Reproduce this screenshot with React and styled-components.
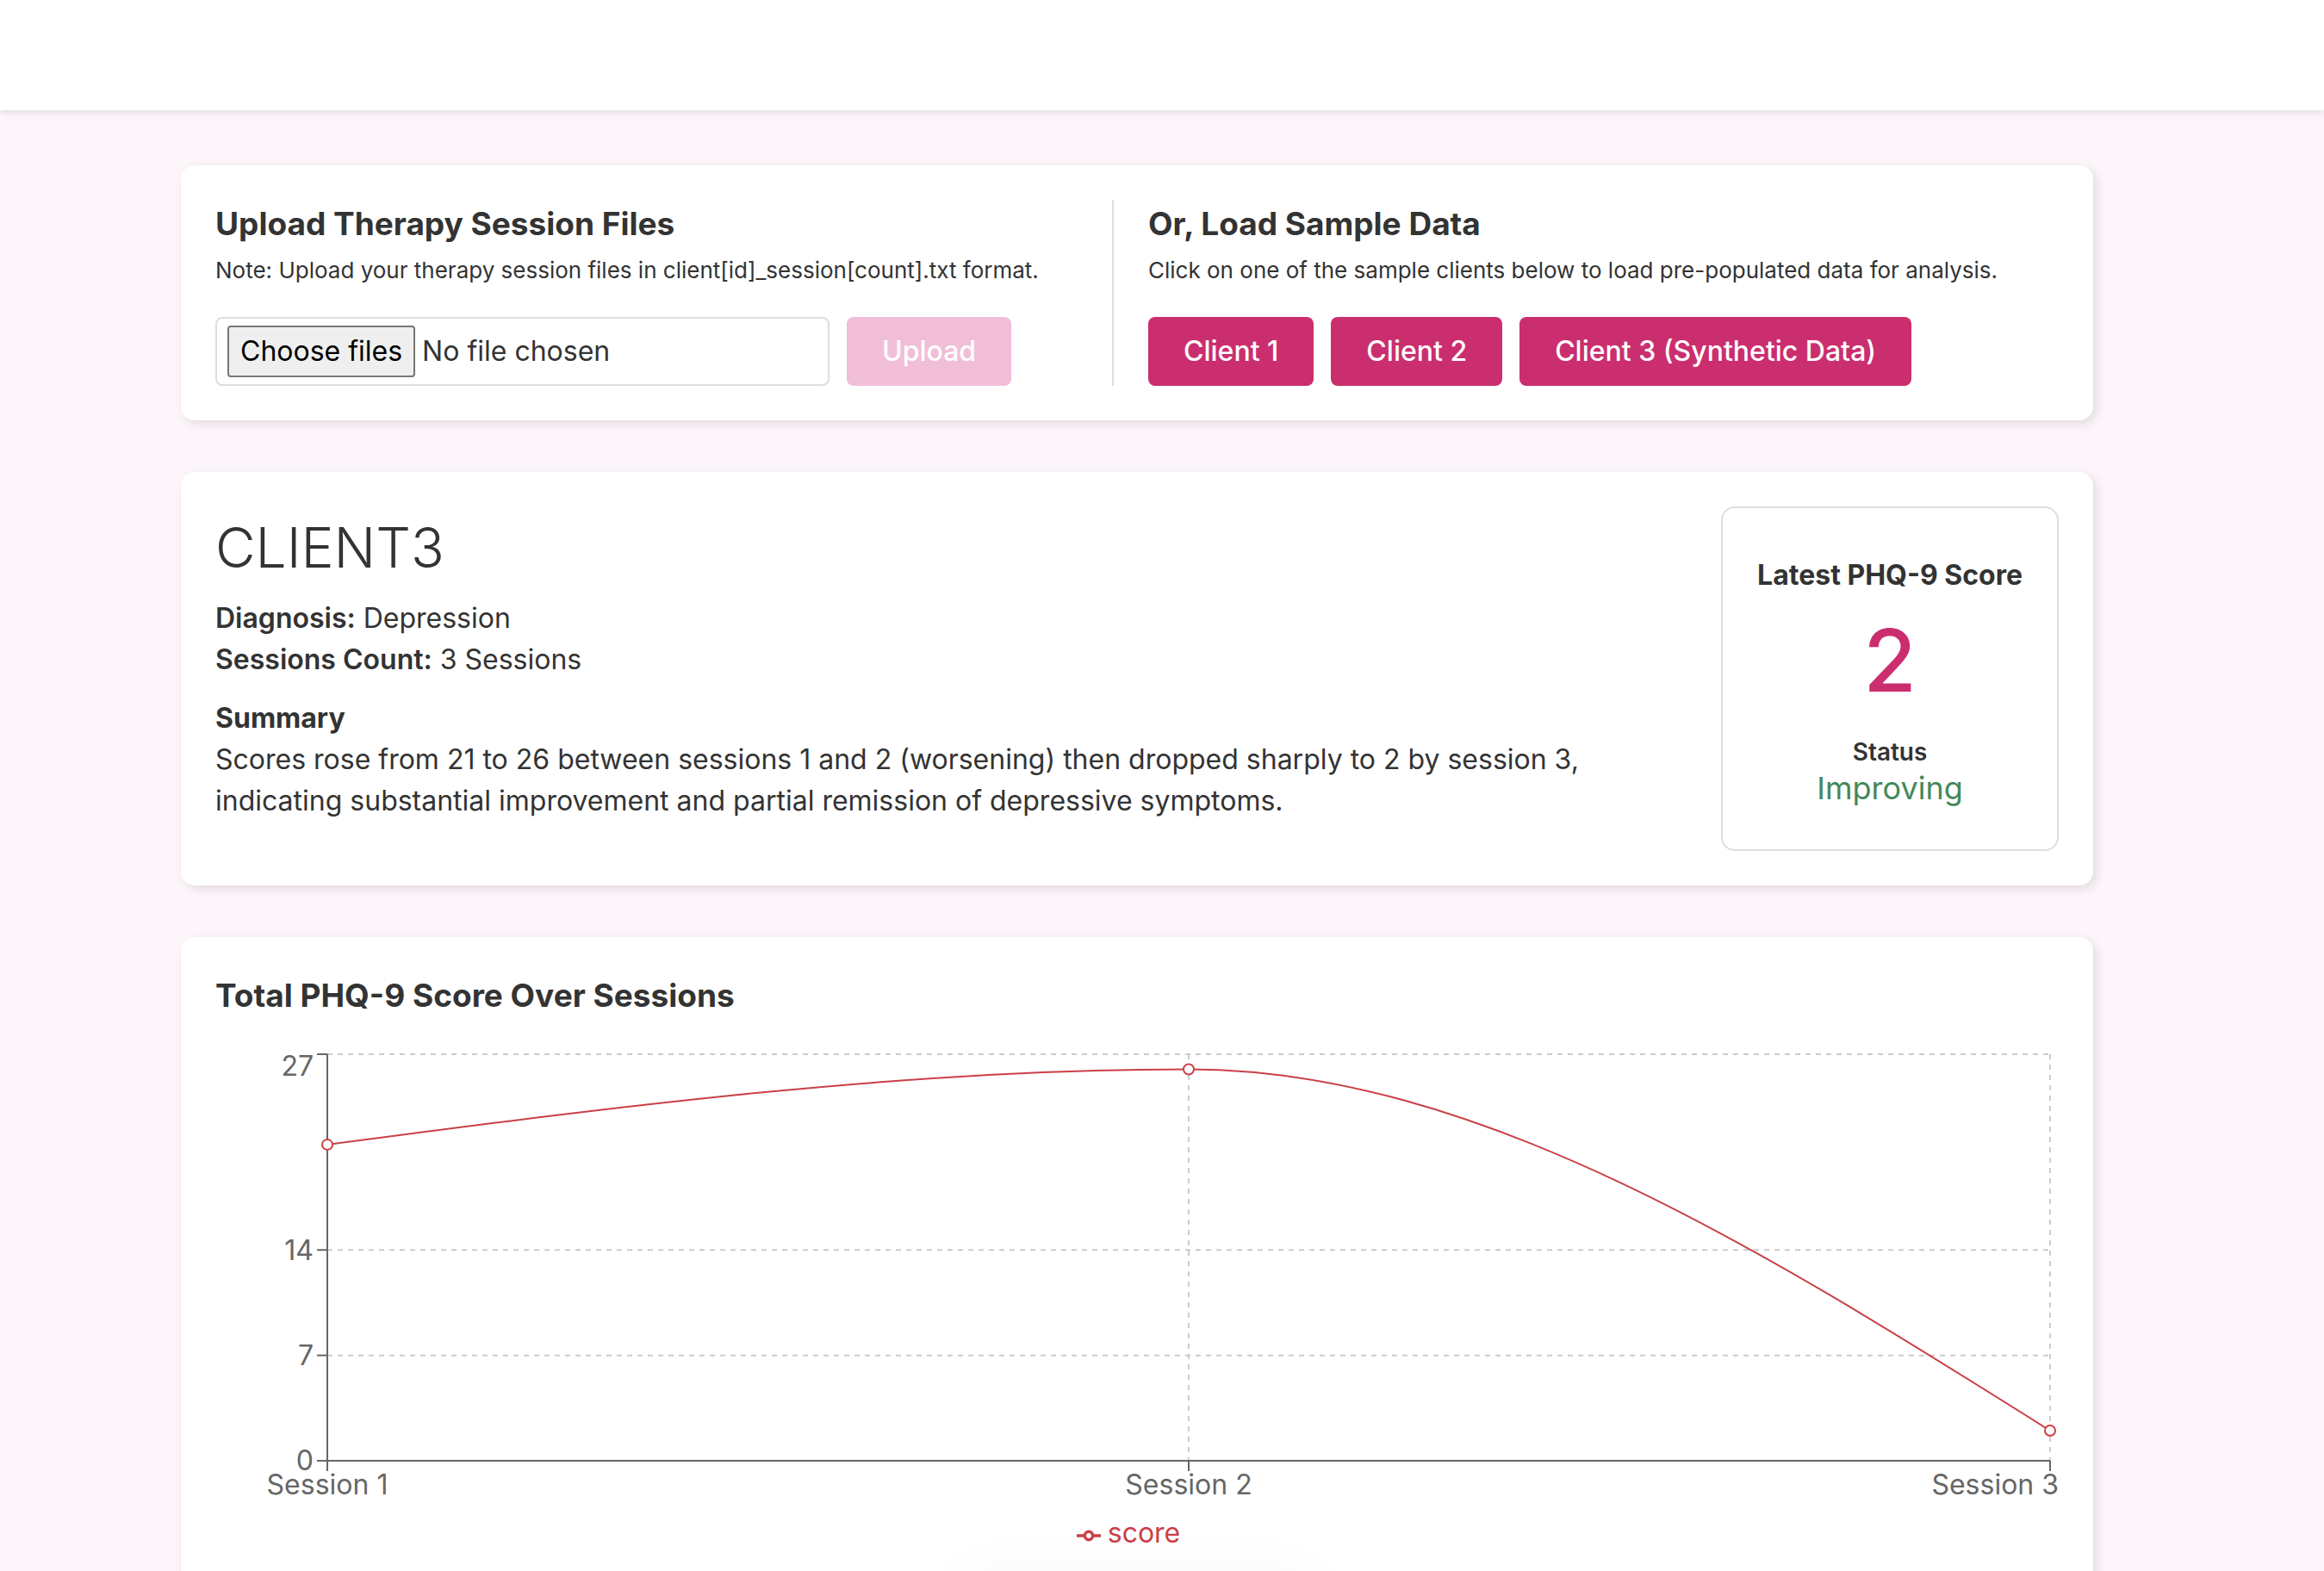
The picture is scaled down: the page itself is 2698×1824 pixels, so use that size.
import React, { useLayoutEffect, useRef, useState } from "react";
import styled, { createGlobalStyle } from "styled-components";

const ACCENT = "#cb2e6e";
const SERIES = "#ca4046";
const AXIS = "#666666";

const GlobalStyle = createGlobalStyle`
  *, *::before, *::after { box-sizing: border-box; }
  html, body, #root { height: 100%; }
  body {
    margin: 0;
    overflow: hidden;
    background: #fcf6fb;
    color: #333333;
    font: 400 32px/48px Inter, "Liberation Sans", sans-serif;
  }
  h1, h2, h3, p { margin: 0; }
`;

const Page = styled.div`
  position: relative;
  display: flex;
  flex-direction: column;
  height: 100vh;
  overflow: hidden;
`;

const TopBar = styled.header`
  flex: none;
  height: 128px;
  background: #ffffff;
  box-shadow: 0 2px 8px rgba(0, 0, 0, 0.12);
`;

const Main = styled.main`
  display: flex;
  flex-direction: column;
  gap: 60px;
  padding: 64px 268px 64px 210px;
`;

const Card = styled.section`
  flex: none;
  padding: 40px;
  background: #ffffff;
  border-radius: 16px;
  box-shadow: 4px 4px 12px rgba(0, 0, 0, 0.11);
`;

const SourceCard = styled(Card)`
  display: grid;
  grid-template-columns: minmax(0, 1041fr) minmax(0, 1099fr);
`;

const Source = styled.div`
  padding-left: ${(p) => (p.$divided ? "40px" : "0")};
  border-left: ${(p) => (p.$divided ? "2px solid #dddddd" : "none")};
`;

const Heading = styled.h2`
  padding-bottom: 2px;
  font-size: 37px;
  line-height: 56px;
  font-weight: 700;
`;

const Note = styled.p`
  margin-bottom: 30px;
  font-size: 26px;
`;

const Controls = styled.div`
  display: flex;
  gap: 20px;
`;

const FilePicker = styled.label`
  position: relative;
  display: flex;
  align-items: center;
  gap: 8px;
  width: 713px;
  height: 80px;
  padding: 0 12px;
  border: 2px solid #dddddd;
  border-radius: 8px;
`;

const FileInput = styled.input`
  position: absolute;
  inset: 0;
  width: 100%;
  opacity: 0;
`;

const FileButton = styled.span`
  height: 60px;
  padding: 0 13px;
  border: 2px solid #767676;
  border-radius: 4px;
  background: #efefef;
  color: #000000;
  line-height: 56px;
`;

const Button = styled.button`
  height: 80px;
  padding: 0 41px;
  border: 0;
  border-radius: 8px;
  background: ${ACCENT};
  color: #ffffff;
  font: inherit;
  font-weight: 500;
  cursor: pointer;

  &:disabled {
    background: #f1bed8;
    cursor: default;
  }
`;

const ClientCard = styled(Card)`
  display: flex;
  gap: 40px;
`;

const ClientInfo = styled.div`
  flex: 1;
  min-width: 0;
`;

const ClientName = styled.h1`
  margin-bottom: 10px;
  font-size: 64px;
  line-height: 96px;
  font-weight: 300;
  text-transform: uppercase;
`;

const Term = styled.strong`
  font-weight: 600;
`;

const Summary = styled.div`
  margin-top: 20px;
`;

const Subheading = styled.h3`
  font-size: 32px;
  line-height: 48px;
  font-weight: 700;
`;

const ScoreBox = styled.aside`
  display: flex;
  flex-direction: column;
  align-items: center;
  justify-content: center;
  height: 400px;
  padding: 4px 40px 0;
  border: 2px solid #dddddd;
  border-radius: 16px;
`;

const ScoreValue = styled.div`
  color: ${ACCENT};
  font-size: 100px;
  line-height: 150px;
  font-weight: 500;
`;

const StatusLabel = styled.div`
  margin-top: 10px;
  font-size: 28px;
  line-height: 42px;
  font-weight: 600;
`;

const StatusValue = styled.div`
  color: #43885a;
  font-size: 36px;
  line-height: 42px;
`;

const ChartFrame = styled.div`
  margin-top: 28px;
`;

const ChartSvg = styled.svg`
  display: block;
  width: 100%;
  height: 542px;
  font-size: 32px;
`;

const Legend = styled.div`
  display: flex;
  justify-content: center;
  align-items: center;
  gap: 8px;
  padding-right: 20px;
  color: ${SERIES};
`;

const LegendIcon = styled.svg`
  width: 28px;
  height: 28px;
  margin-top: 6px;
`;

const BottomGlow = styled.div`
  position: absolute;
  left: 50%;
  bottom: -60px;
  width: 400px;
  height: 40px;
  margin-left: -228px;
  border-radius: 20px;
  box-shadow: 0 0 80px rgba(0, 0, 0, 0.07);
`;

const sessions = [
  { name: "Session 1", score: 21 },
  { name: "Session 2", score: 26 },
  { name: "Session 3", score: 2 },
];
const yTicks = [0, 7, 14, 27];
const Y_MAX = 27;
const PLOT = { left: 130, right: 10, top: 10, height: 472 };

/* Cubic path through the points that never overshoots between them. */
function monotonePath(pts) {
  const slope = (a, b) => (b.y - a.y) / (b.x - a.x);
  const n = pts.length;
  const tangents = pts.map((p, i) => {
    if (i === 0 || i === n - 1) return 0;
    const s0 = slope(pts[i - 1], p);
    const s1 = slope(p, pts[i + 1]);
    const h0 = p.x - pts[i - 1].x;
    const h1 = pts[i + 1].x - p.x;
    const mean = (s0 * h1 + s1 * h0) / (h0 + h1);
    const limit = Math.min(Math.abs(s0), Math.abs(s1), 0.5 * Math.abs(mean));
    return (Math.sign(s0) + Math.sign(s1)) * limit;
  });
  tangents[0] = (3 * slope(pts[0], pts[1]) - tangents[1]) / 2;
  tangents[n - 1] = (3 * slope(pts[n - 2], pts[n - 1]) - tangents[n - 2]) / 2;
  let d = `M${pts[0].x},${pts[0].y}`;
  for (let i = 1; i < n; i++) {
    const a = pts[i - 1];
    const b = pts[i];
    const dx = (b.x - a.x) / 3;
    d += `C${a.x + dx},${a.y + dx * tangents[i - 1]},${b.x - dx},${b.y - dx * tangents[i]},${b.x},${b.y}`;
  }
  return d;
}

function ScoreChart() {
  const frame = useRef(null);
  const [width, setWidth] = useState(2140);

  useLayoutEffect(() => {
    const measure = () => setWidth(frame.current.clientWidth);
    measure();
    window.addEventListener("resize", measure);
    return () => window.removeEventListener("resize", measure);
  }, []);

  const x0 = PLOT.left;
  const x1 = width - PLOT.right;
  const bottom = PLOT.top + PLOT.height;
  const yOf = (v) => bottom - (v / Y_MAX) * PLOT.height;
  const pts = sessions.map((s, i) => ({
    x: x0 + ((x1 - x0) * i) / (sessions.length - 1),
    y: yOf(s.score),
  }));

  return (
    <ChartFrame ref={frame}>
      <ChartSvg role="img" aria-label="Total PHQ-9 score for each session">
        <g stroke="#cccccc" strokeWidth="2" strokeDasharray="6 6">
          {yTicks.slice(1).map((v) => (
            <line key={v} x1={x0} x2={x1} y1={yOf(v)} y2={yOf(v)} />
          ))}
          {pts.map((p, i) => (
            <line key={i} x1={p.x} x2={p.x} y1={PLOT.top} y2={bottom} />
          ))}
        </g>
        <g stroke={AXIS} strokeWidth="2">
          <line x1={x0} x2={x1} y1={bottom} y2={bottom} />
          <line x1={x0} x2={x0} y1={PLOT.top} y2={bottom} />
          {yTicks.map((v) => (
            <line key={v} x1={x0 - 12} x2={x0} y1={yOf(v)} y2={yOf(v)} />
          ))}
          {pts.map((p, i) => (
            <line key={i} x1={p.x} x2={p.x} y1={bottom} y2={bottom + 12} />
          ))}
        </g>
        <g fill={AXIS}>
          {yTicks.map((v) => (
            <text key={v} x={x0 - 16} y={Math.max(yOf(v), 24)} dy="0.355em" textAnchor="end">
              {v}
            </text>
          ))}
          {sessions.map((s, i) => {
            const last = i === sessions.length - 1;
            return (
              <text
                key={s.name}
                x={last ? width : pts[i].x}
                y={bottom + 39}
                textAnchor={last ? "end" : "middle"}
              >
                {s.name}
              </text>
            );
          })}
        </g>
        <path d={monotonePath(pts)} fill="none" stroke={SERIES} strokeWidth="2" />
        <g fill="#ffffff" stroke={SERIES} strokeWidth="2">
          {pts.map((p, i) => (
            <circle key={i} cx={p.x} cy={p.y} r="6" />
          ))}
        </g>
      </ChartSvg>
      <Legend>
        <LegendIcon viewBox="0 0 32 32" aria-hidden="true">
          <path
            d="M0,16h10.667A5.333,5.333,0,1,1,21.333,16H32M21.333,16A5.333,5.333,0,1,1,10.667,16"
            fill="none"
            stroke={SERIES}
            strokeWidth="4"
          />
        </LegendIcon>
        <span>score</span>
      </Legend>
    </ChartFrame>
  );
}

export default function App() {
  return (
    <>
      <GlobalStyle />
      <Page>
        <TopBar />
        <Main>
          <SourceCard>
            <Source>
              <Heading>Upload Therapy Session Files</Heading>
              <Note>Note: Upload your therapy session files in client[id]_session[count].txt format.</Note>
              <Controls>
                <FilePicker>
                  <FileInput type="file" multiple />
                  <FileButton>Choose files</FileButton>
                  <span>No file chosen</span>
                </FilePicker>
                <Button type="button" disabled>Upload</Button>
              </Controls>
            </Source>
            <Source $divided>
              <Heading>Or, Load Sample Data</Heading>
              <Note>Click on one of the sample clients below to load pre-populated data for analysis.</Note>
              <Controls>
                <Button type="button">Client 1</Button>
                <Button type="button">Client 2</Button>
                <Button type="button">Client 3 (Synthetic Data)</Button>
              </Controls>
            </Source>
          </SourceCard>

          <ClientCard>
            <ClientInfo>
              <ClientName>Client3</ClientName>
              <p><Term>Diagnosis:</Term> Depression</p>
              <p><Term>Sessions Count:</Term> 3 Sessions</p>
              <Summary>
                <Subheading>Summary</Subheading>
                <p>
                  Scores rose from 21 to 26 between sessions 1 and 2 (worsening) then dropped sharply
                  to 2 by session 3, indicating substantial improvement and partial remission of
                  depressive symptoms.
                </p>
              </Summary>
            </ClientInfo>
            <ScoreBox>
              <Subheading>Latest PHQ-9 Score</Subheading>
              <ScoreValue>2</ScoreValue>
              <StatusLabel>Status</StatusLabel>
              <StatusValue>Improving</StatusValue>
            </ScoreBox>
          </ClientCard>

          <Card>
            <Heading>Total PHQ-9 Score Over Sessions</Heading>
            <ScoreChart />
          </Card>
        </Main>
        <BottomGlow />
      </Page>
    </>
  );
}
